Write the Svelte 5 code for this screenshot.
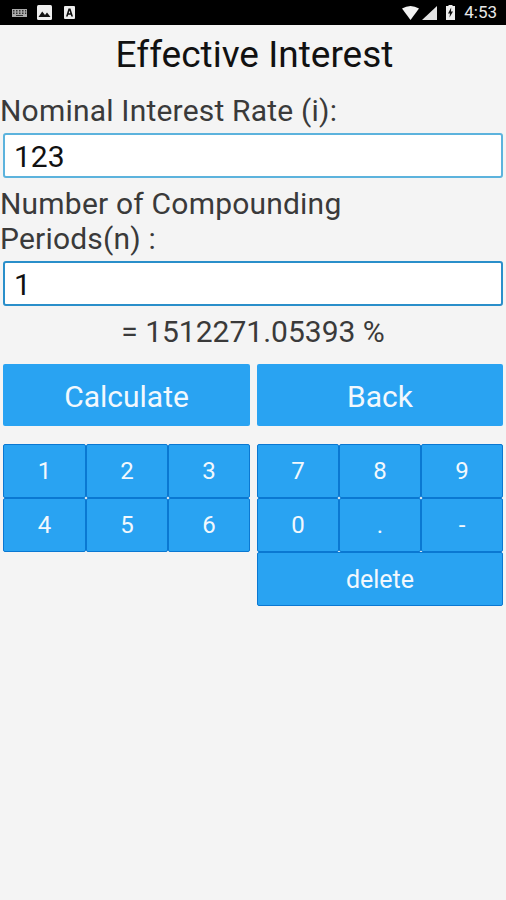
<script>
  let rate = $state("123");
  let periods = $state("1");

  const leftKeys = ["1", "2", "3", "4", "5", "6"];
  const rightKeys = ["7", "8", "9", "0", ".", "-"];
</script>

<div class="page">
  <div class="statusbar">
    <div class="status-left">
      <svg class="ic-keyboard" width="15" height="8" viewBox="0 0 15 8">
        <rect width="15" height="8" fill="#aaa" />
        <g fill="#333">
          <rect x="1" y="1" width="1.5" height="1.5" /><rect x="4" y="1" width="1.5" height="1.5" />
          <rect x="7" y="1" width="1.5" height="1.5" /><rect x="10" y="1" width="1.5" height="1.5" />
          <rect x="13" y="1" width="1.2" height="1.5" /><rect x="1" y="3.5" width="1.5" height="1.5" />
          <rect x="4" y="3.5" width="1.5" height="1.5" /><rect x="7" y="3.5" width="1.5" height="1.5" />
          <rect x="10" y="3.5" width="1.5" height="1.5" /><rect x="13" y="3.5" width="1.2" height="1.5" />
          <rect x="4" y="6" width="7" height="1" />
        </g>
      </svg>
      <svg class="ic-image" width="15" height="15" viewBox="0 0 15 15">
        <rect width="15" height="15" rx="1.5" fill="#eee" />
        <path d="M1.5 12 L5.2 6.5 L8 10 L10 7.5 L13.5 12 Z" fill="#111" />
      </svg>
      <svg class="ic-a" width="11" height="13" viewBox="0 0 11 13">
        <rect width="11" height="13" rx="1" fill="#eee" />
        <path d="M2 10.5 L4.5 2.5 H6.5 L9 10.5 H7.3 L6.8 8.8 H4.2 L3.7 10.5 Z M4.7 7.3 H6.3 L5.5 4.6 Z" fill="#111" fill-rule="evenodd" />
      </svg>
    </div>
    <div class="status-right">
      <svg width="17" height="14" viewBox="0 0 17 14"><path d="M0 2.5 Q8.5 -2.5 17 2.5 L8.5 14 Z" fill="#f2f2f2" /></svg>
      <svg class="ic-signal" width="15" height="14" viewBox="0 0 15 14"><path d="M0 14 L15 0 V14 Z" fill="#e4e4e4" /></svg>
      <svg class="ic-battery" width="9" height="15" viewBox="0 0 9 15">
        <path d="M2.5 0 H6.5 V1 H9 V15 H0 V1 H2.5 Z" fill="#eee" />
        <path d="M5.2 2.5 L2 8.5 H4 L3.5 12.5 L7 6.5 H5 Z" fill="#111" />
      </svg>
      <span class="clock">4:53</span>
    </div>
  </div>

  <main>
    <h1>Effective Interest</h1>

    <label class="field-label" for="rate">Nominal Interest Rate (i):</label>
    <input id="rate" class="field" type="text" bind:value={rate} />

    <label class="field-label second" for="periods">Number of Compounding<br />Periods(n) :</label>
    <input id="periods" class="field focused" type="text" bind:value={periods} />

    <div class="result">= 1512271.05393 %</div>

    <div class="columns actions">
      <button class="action">Calculate</button>
      <button class="action">Back</button>
    </div>

    <div class="columns keypad">
      <div class="keys left">
        {#each leftKeys as key}
          <button class="key">{key}</button>
        {/each}
      </div>
      <div class="keys">
        {#each rightKeys as key}
          <button class="key">{key}</button>
        {/each}
        <button class="key wide">delete</button>
      </div>
    </div>
  </main>
</div>

<style>
  :global(body) {
    margin: 0;
    background: #f4f4f4;
  }

  .page {
    width: 506px;
    height: 900px;
    overflow: hidden;
    background: #f4f4f4;
    font-family: Roboto, "Liberation Sans", sans-serif;
    color: #3a3a3a;
  }

  .statusbar {
    height: 25px;
    background: #000;
    display: flex;
    justify-content: space-between;
    align-items: center;
    padding: 0 9px 0 12px;
  }

  .status-left,
  .status-right {
    display: flex;
    align-items: center;
  }

  .ic-image {
    margin-left: 10px;
  }

  .ic-a {
    margin-left: 12px;
  }

  .ic-signal {
    margin-left: 3px;
  }

  .ic-battery {
    margin-left: 9px;
  }

  .clock {
    margin-left: 9px;
    color: #e8e8e8;
    font-size: 17px;
    line-height: 25px;
  }

  h1 {
    margin: 0;
    height: 56px;
    padding-left: 3px;
    font-size: 37px;
    font-weight: 400;
    line-height: 60px;
    text-align: center;
    color: #111;
  }

  .field-label {
    display: block;
    font-size: 30px;
    line-height: 35px;
    height: 52px;
    padding-top: 12px;
    box-sizing: border-box;
    letter-spacing: 0.2px;
  }

  .field-label.second {
    height: 83px;
    padding-top: 8px;
  }

  .field {
    display: block;
    box-sizing: border-box;
    width: 500px;
    height: 45px;
    margin: 0 3px;
    padding: 2px 9px 0;
    border: 2px solid #5cb3dd;
    border-radius: 3px;
    background: #fff;
    font-family: inherit;
    font-size: 30px;
    color: #111;
    outline: none;
  }

  .field.focused {
    border-color: #2a8fca;
  }

  .result {
    margin-top: 8px;
    height: 50px;
    font-size: 30px;
    line-height: 36px;
    text-align: center;
  }

  .columns {
    display: flex;
    gap: 7px;
    padding: 0 3px;
  }

  .action {
    width: 247px;
    height: 62px;
    padding: 2px 0 0;
    border: none;
    border-radius: 2px;
    background: #29a3f2;
    color: #f2f8fd;
    font-family: inherit;
    font-size: 30px;
  }

  .action:last-child {
    width: 246px;
  }

  .keypad {
    margin-top: 18px;
  }

  .keys {
    width: 246px;
    display: grid;
    grid-template-columns: repeat(3, 82px);
    grid-auto-rows: 54px;
    align-content: start;
  }

  .keys.left {
    width: 247px;
    grid-template-columns: 83px 82px 82px;
  }

  .key {
    padding: 0;
    border: 1px solid #0a78d2;
    border-radius: 2px;
    background: #29a3f2;
    color: #f2f8fd;
    font-family: inherit;
    font-size: 24px;
  }

  .key.wide {
    grid-column: 1 / 4;
    font-size: 25px;
  }
</style>
